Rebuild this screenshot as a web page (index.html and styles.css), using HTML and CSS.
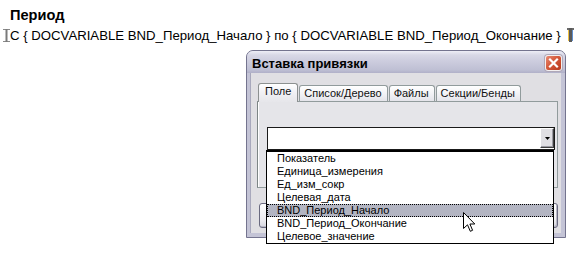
FILE: index.html
```html
<!DOCTYPE html>
<html lang="ru">
<head>
<meta charset="utf-8">
<title>Период</title>
<link rel="stylesheet" href="styles.css">
</head>
<body>
<div class="doc">
  <div class="heading">Период</div>
  <div class="line">
    <svg class="ibeam" width="7" height="13" viewBox="0 0 7 13"><path d="M0 0.5H7M0 12.5H7" stroke="#8a8a8a" stroke-width="1"/><rect x="2.5" y="0" width="2" height="13" fill="#7a7a7a"/></svg>
    <span class="code">С { DOCVARIABLE BND_Период_Начало } по { DOCVARIABLE BND_Период_Окончание }</span>
    <svg class="mark" width="7" height="14" viewBox="0 0 7 14"><rect x="0" y="0" width="7" height="2" fill="#6a6a6a"/><rect x="2" y="0" width="3" height="14" fill="#5a5a5a"/><rect x="1" y="2" width="1" height="11" fill="#f0c040"/><rect x="5" y="2" width="1" height="11" fill="#6090d0"/></svg>
  </div>
</div>

<div class="dialog">
  <div class="titlebar">
    <span class="title">Вставка привязки</span>
    <span class="close"><svg width="17" height="16" viewBox="0 0 17 16"><path d="M5 4.5L12 11.5M12 4.5L5 11.5" stroke="#fff" stroke-width="2.2" stroke-linecap="square"/></svg></span>
  </div>
  <div class="client">
    <div class="tabs">
      <div class="tab active">Поле</div>
      <div class="tab">Список/Дерево</div>
      <div class="tab">Файлы</div>
      <div class="tab">Секции/Бенды</div>
    </div>
    <div class="panel">
      <div class="combo">
        <div class="combo-btn"><svg width="5" height="3" viewBox="0 0 5 3"><path d="M0 0H5L2.5 3Z" fill="#000"/></svg></div>
      </div>
    </div>
    <div class="buttons">
      <div class="btn"></div>
      <div class="btn"></div>
    </div>
  </div>
</div>

<ul class="droplist">
  <li class="item">Показатель</li>
  <li class="item">Единица_измерения</li>
  <li class="item">Ед_изм_сокр</li>
  <li class="item">Целевая_дата</li>
  <li class="item selected">BND_Период_Начало</li>
  <li class="item">BND_Период_Окончание</li>
  <li class="item">Целевое_значение</li>
</ul>

<svg class="cursor" width="13" height="21" viewBox="0 0 13 21"><path d="M0.5 0.5V16.5L4.5 12.8L7.3 19.3L9.6 18.3L6.9 12H11.8Z" fill="#fff" stroke="#000" stroke-width="1" stroke-linejoin="miter"/></svg>
</body>
</html>
```

FILE: styles.css
```css
html, body {
  margin: 0;
  padding: 0;
  background: #ffffff;
}

body {
  width: 588px;
  height: 254px;
  overflow: hidden;
  position: relative;
  font-family: "Liberation Sans", Arial, sans-serif;
  color: #000;
}

.doc {
  padding: 7px 0 0 3px;
}

.heading {
  font-weight: bold;
  font-size: 14.6px;
  line-height: 16px;
  padding-left: 7px;
}

.line {
  display: flex;
  align-items: center;
  margin-top: 5px;
  font-size: 13.2px;
  line-height: 15px;
  height: 15px;
}

.ibeam {
  flex: none;
}

.code {
  white-space: pre;
}

.mark {
  flex: none;
  margin-left: 6px;
  margin-top: -2px;
}

/* dialog window */
.dialog {
  position: absolute;
  left: 246px;
  top: 50px;
  width: 320px;
  height: 188px;
  box-sizing: border-box;
  border: 1px solid #74748f;
  border-radius: 7px 7px 0 0;
  background: #c4c4d6;
  display: flex;
  flex-direction: column;
  overflow: hidden;
}

.titlebar {
  height: 22px;
  box-sizing: border-box;
  padding: 2px 3px 0 5px;
  display: flex;
  align-items: center;
  justify-content: space-between;
  background: linear-gradient(#eeeef6 0%, #d8d8e6 18%, #cbcbdd 50%, #bfc0d4 85%, #b0b0c8 100%);
}

.title {
  font-weight: bold;
  font-size: 13px;
  line-height: 15px;
  color: #000;
}

.close {
  width: 17px;
  height: 16px;
  box-sizing: border-box;
  border: 1px solid #f3f0f0;
  border-radius: 3px;
  background: linear-gradient(135deg, #e88a74 0%, #d45a3c 45%, #b8381c 100%);
  display: flex;
  align-items: center;
  justify-content: center;
  box-shadow: 0 0 0 1px #b0a8b8;
}

.close svg {
  display: block;
  margin: -1px;
}

.client {
  flex: 1;
  margin: 0 4px 4px 3px;
  background: #e0dfe3;
  border-left: 1px solid #a8a8bc;
  padding-top: 10px;
  display: flex;
  flex-direction: column;
}

.tabs {
  display: flex;
  align-items: flex-end;
  height: 18px;
  margin-left: 7px;
  position: relative;
  z-index: 1;
}

.tab {
  height: 16px;
  box-sizing: border-box;
  padding: 0 5px 0 4px;
  margin-left: 1px;
  border: 1px solid #919b9c;
  border-bottom: none;
  border-radius: 3px 3px 0 0;
  background: linear-gradient(#ffffff, #f0f0f4 60%, #e4e4ea);
  font-size: 11px;
  line-height: 15px;
  white-space: nowrap;
  color: #111;
}

.tab.active {
  height: 19px;
  margin-left: 0;
  margin-bottom: -1px;
  padding: 0 6px;
  line-height: 14px;
  background: linear-gradient(#ffffff, #f2f2f6 40%, #e6e6ea);
  border-color: #8c9090;
}

.panel {
  height: 87px;
  box-sizing: border-box;
  margin: 0 3px 0 6px;
  border: 1px solid #919b9c;
  border-left-color: #7d8585;
  background: #e5e5e9;
  box-shadow: inset 1px 0 0 #ffffff;
  padding: 25px 0 0 9px;
}

.combo {
  width: 288px;
  height: 23px;
  box-sizing: border-box;
  border: 1px solid #1a1a1a;
  background: #ffffff;
  display: flex;
  justify-content: flex-end;
}

.combo-btn {
  width: 14px;
  height: 20px;
  box-sizing: border-box;
  background: #e0dfe3;
  border-top: 1px solid #ffffff;
  border-left: 1px solid #ffffff;
  border-right: 1px solid #404040;
  border-bottom: 1px solid #404040;
  box-shadow: inset -1px -1px 0 #9a9aa2;
  display: flex;
  align-items: center;
  justify-content: center;
}

.combo-btn svg {
  display: block;
}

.buttons {
  display: flex;
  justify-content: space-between;
  margin: 15px 3px 0 8px;
}

.btn {
  width: 75px;
  height: 25px;
  box-sizing: border-box;
  border: 1px solid #6a6a80;
  border-radius: 3px;
  background: linear-gradient(#ffffff, #ecebf0 70%, #d6d6de);
  box-shadow: inset -1px -1px 0 #b8b8c6;
}

/* dropdown list */
.droplist {
  position: absolute;
  left: 266px;
  top: 150px;
  width: 288px;
  box-sizing: border-box;
  margin: 0;
  padding: 0;
  list-style: none;
  background: #ffffff;
  border: 1px solid #000;
  border-top-width: 2px;
  z-index: 5;
}

.item {
  height: 13px;
  box-sizing: border-box;
  padding-left: 10px;
  font-size: 11px;
  line-height: 13px;
  white-space: nowrap;
}

.item.selected {
  background: #b3b5c2;
  outline: 1px dotted #000;
  outline-offset: -1px;
}

.cursor {
  position: absolute;
  left: 463px;
  top: 212px;
  z-index: 10;
}
```
